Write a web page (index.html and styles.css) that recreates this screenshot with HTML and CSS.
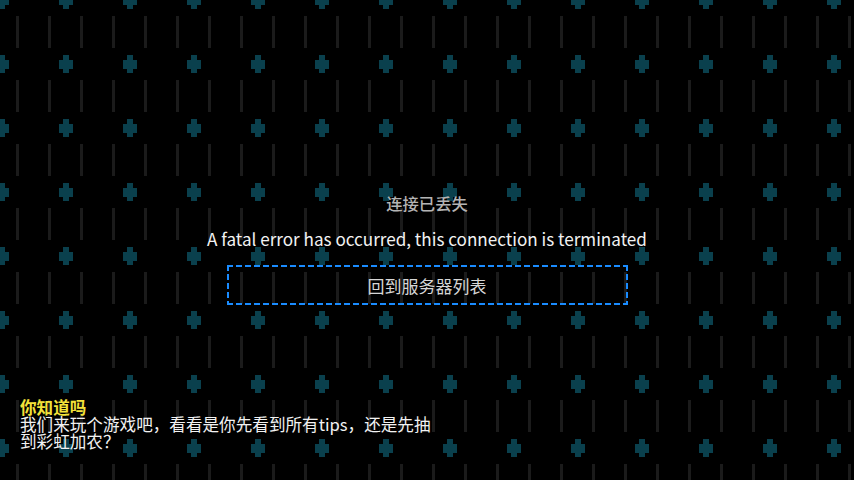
FILE: index.html
```html
<!DOCTYPE html>
<html lang="zh-CN">
<head>
<meta charset="utf-8">
<title>连接已丢失</title>
<link rel="stylesheet" href="styles.css">
</head>
<body>
<div class="screen">
  <div class="dialog">
    <div class="title">连接已丢失</div>
    <div class="message">A fatal error has occurred, this connection is terminated</div>
    <div class="button">回到服务器列表</div>
  </div>
  <div class="tips">
    <div class="tips-title">你知道吗</div>
    <div class="tips-body">我们来玩个游戏吧，看看是你先看到所有tips，还是先抽到彩虹加农？</div>
  </div>
</div>
</body>
</html>
```
FILE: styles.css
```css
html, body {
  margin: 0;
  padding: 0;
  background: #000;
}
.screen {
  width: 854px;
  height: 480px;
  display: flex;
  flex-direction: column;
  font-family: "Noto Sans CJK SC", "Noto Sans", sans-serif;
  background-color: #000;
  background-image:
    url("data:image/svg+xml,%3Csvg xmlns='http://www.w3.org/2000/svg' width='64' height='64'%3E%3Crect x='25' y='28' width='14' height='9' fill='%230a404d'/%3E%3Crect x='29' y='23' width='6' height='18' fill='%230a404d'/%3E%3C/svg%3E"),
    url("data:image/svg+xml,%3Csvg xmlns='http://www.w3.org/2000/svg' width='64' height='64'%3E%3Crect x='16' y='16' width='3' height='32' fill='%231b1b1b'/%3E%3Crect x='48' y='16' width='3' height='32' fill='%231b1b1b'/%3E%3C/svg%3E");
  background-position: 34px 32px, 0 0;
  background-size: 64px 64px, 64px 64px;
  overflow: hidden;
}
.dialog {
  display: flex;
  flex-direction: column;
  align-items: center;
  padding-top: 191px;
}
.title {
  font-size: 16.3px;
  line-height: 24px;
  font-weight: 500;
  color: #b4b4b4;
}
.message {
  margin-top: 12px;
  font-size: 17.1px;
  line-height: 24px;
  color: #f2f2f2;
}
.button {
  margin-top: 14px;
  width: 401px;
  height: 40px;
  box-sizing: border-box;
  display: flex;
  align-items: center;
  justify-content: center;
  font-size: 17px;
  color: #d6d6d6;
  background:
    repeating-linear-gradient(90deg, #1a8cff 0 6px, transparent 6px 9px) left top / 100% 2px no-repeat,
    repeating-linear-gradient(90deg, #1a8cff 0 6px, transparent 6px 9px) left bottom / 100% 2px no-repeat,
    repeating-linear-gradient(180deg, #1a8cff 0 6px, transparent 6px 9px) left top / 2px 100% no-repeat,
    repeating-linear-gradient(180deg, #1a8cff 0 6px, transparent 6px 9px) right top / 2px 100% no-repeat;
}
.tips {
  margin-top: auto;
  padding: 0 0 30px 20px;
  width: 416px;
  font-size: 16.6px;
  line-height: 17px;
}
.tips-title {
  color: #f3e23a;
  font-weight: bold;
}
.tips-body {
  color: #f2f2f2;
}
```
